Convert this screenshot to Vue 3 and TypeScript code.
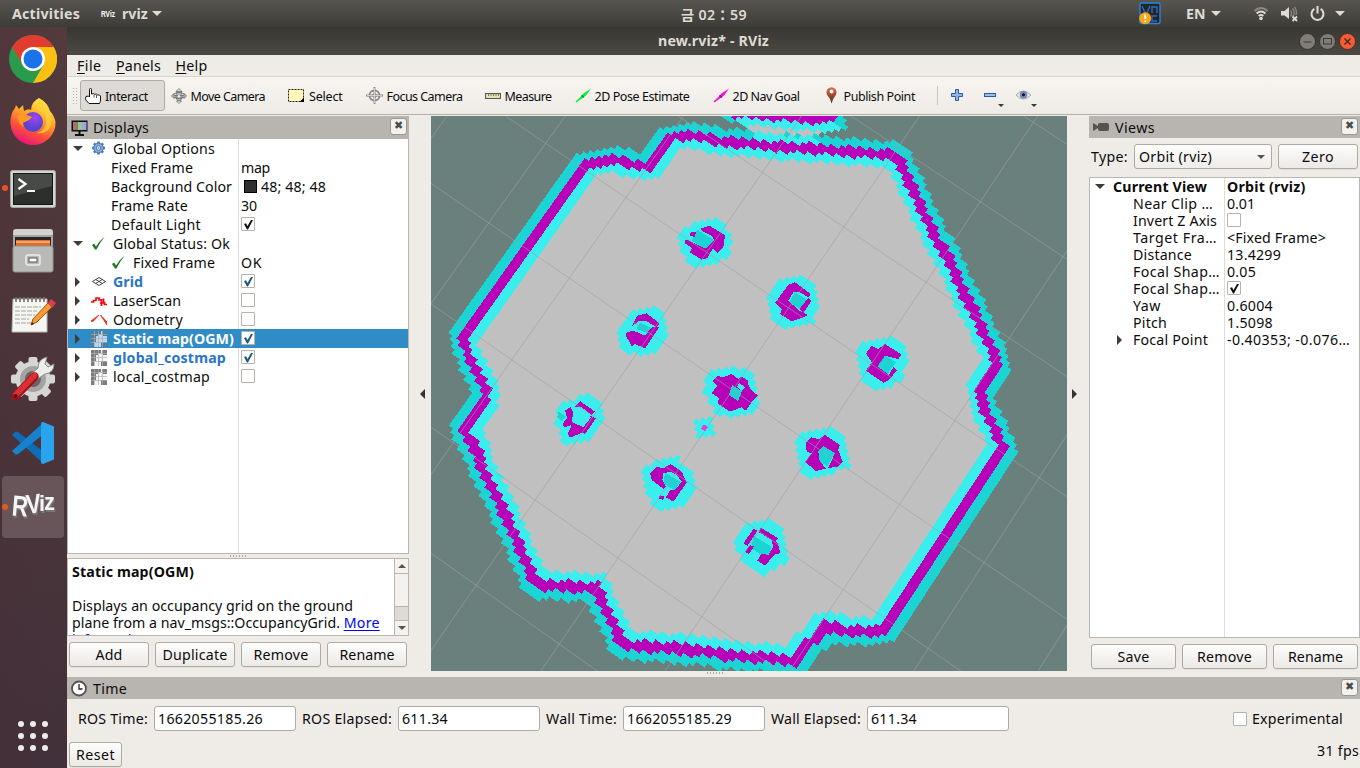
<script setup lang="ts">
type Pt = [number, number]
interface Row {
  label: string
  w: number
  icon?: string
  arrow?: 'open' | 'closed'
  level?: number
  value?: string
  vw?: number
  check?: 'on' | 'off' | 'blue'
  swatch?: boolean
  strong?: boolean
  selected?: boolean
}

/* Spreads a label over a given width in pixels. */
const vFit = {
  mounted(el: HTMLElement, binding: { value: number }) {
    const n = Array.from(el.textContent ?? '').length
    const natural = el.getBoundingClientRect().width
    if (n > 0) el.style.letterSpacing = ((binding.value - natural) / n).toFixed(3) + 'px'
  },
}

const tools = [
  { id: 'hand', label: 'Interact', w: 43 },
  { id: 'move', label: 'Move Camera', w: 74.5 },
  { id: 'select', label: 'Select', w: 33.5 },
  { id: 'focus', label: 'Focus Camera', w: 76 },
  { id: 'ruler', label: 'Measure', w: 47 },
  { id: 'pose', label: '2D Pose Estimate', w: 95 },
  { id: 'goal', label: '2D Nav Goal', w: 67 },
  { id: 'pin', label: 'Publish Point', w: 71.5 },
]

const displays: Row[] = [
  { label: 'Global Options', w: 102, icon: 'gear', arrow: 'open' },
  { label: 'Fixed Frame', w: 82, level: 1, value: 'map', vw: 29 },
  { label: 'Background Color', w: 121, level: 1, value: '48; 48; 48', vw: 65, swatch: true },
  { label: 'Frame Rate', w: 77, level: 1, value: '30', vw: 16 },
  { label: 'Default Light', w: 90, level: 1, check: 'on' },
  { label: 'Global Status: Ok', w: 117, icon: 'ok', arrow: 'open' },
  { label: 'Fixed Frame', w: 82, icon: 'ok', level: 2, value: 'OK', vw: 21 },
  { label: 'Grid', w: 30, icon: 'grid', arrow: 'closed', check: 'blue', strong: true },
  { label: 'LaserScan', w: 68, icon: 'laser', arrow: 'closed', check: 'off' },
  { label: 'Odometry', w: 70, icon: 'odom', arrow: 'closed', check: 'off' },
  { label: 'Static map(OGM)', w: 121, icon: 'map', arrow: 'closed', check: 'blue', strong: true, selected: true },
  { label: 'global_costmap', w: 113, icon: 'map', arrow: 'closed', check: 'blue', strong: true },
  { label: 'local_costmap', w: 97, icon: 'map', arrow: 'closed', check: 'off' },
]

const views: Row[] = [
  { label: 'Near Clip …', w: 80, value: '0.01', vw: 28 },
  { label: 'Invert Z Axis', w: 84, check: 'off' },
  { label: 'Target Fra…', w: 84, value: '<Fixed Frame>', vw: 99 },
  { label: 'Distance', w: 59, value: '13.4299', vw: 54 },
  { label: 'Focal Shap…', w: 87, value: '0.05', vw: 29 },
  { label: 'Focal Shap…', w: 87, check: 'on' },
  { label: 'Yaw', w: 28, value: '0.6004', vw: 46 },
  { label: 'Pitch', w: 34, value: '1.5098', vw: 46 },
  { label: 'Focal Point', w: 75, value: '-0.40353; -0.076…', vw: 123, arrow: 'closed' },
]

const clocks = [
  { label: 'ROS Time:', w: 70, value: '1662055185.26', vw: 105 },
  { label: 'ROS Elapsed:', w: 90, value: '611.34', vw: 46 },
  { label: 'Wall Time:', w: 71, value: '1662055185.29', vw: 105 },
  { label: 'Wall Elapsed:', w: 90, value: '611.34', vw: 46 },
]

const teeth = [0, 45, 90, 135]
const dots: Pt[] = []
for (let r = 0; r < 3; r++) for (let c = 0; c < 3; c++) dots.push([4 + c * 12, 4 + r * 12])

/* ---- 3D scene: ground plane seen from slightly off the vertical ---- */
const LEFT = 431
const TOP = 116
const K = 9.1e-5
const CELLS = 20.1
const SHIFT = 0.39

function project(i: number, j: number): Pt {
  const u = -208 + 82.65 * i - 56.35 * j
  const v = 255.5 - 56.6 * i - 82.8 * j
  const d = 1 + K * v
  return [318 + u / d, 277 - v / d]
}
function unproject(x: number, y: number): Pt {
  const s = 277 - y
  const v = s / (1 - K * s)
  const u = (x - 318) * (1 + K * v) + 208
  const q = v - 255.5
  return [(82.65 * u - 56.6 * q) / 10037, (-56.35 * u - 82.8 * q) / 10037]
}
const toCell = (x: number, y: number): Pt => {
  const [i, j] = unproject(x - LEFT, y - TOP)
  return [i * CELLS - SHIFT, j * CELLS]
}

const gridLines: string[] = []
for (let n = -8; n <= 12; n++) {
  for (const [a, b] of [[project(n, -10), project(n, 12)], [project(-8, n), project(14, n)]]) {
    gridLines.push(`M${a[0].toFixed(1)} ${a[1].toFixed(1)}L${b[0].toFixed(1)} ${b[1].toFixed(1)}`)
  }
}
const gridPath = gridLines.join('')

const wall: Pt[] = [
  [587, 163], [610, 159], [630, 163], [648.5, 167], [671.7, 137.5], [680, 135], [700, 136.5], [720, 141],
  [740, 142.5], [770, 146.3], [806.7, 147.5], [840, 150.7], [866.7, 152.3], [893.3, 154.7], [901.7, 161.7],
  [910, 180.7], [923.3, 209], [936.7, 237.3], [953.3, 264], [963.3, 290.7], [976.7, 314], [986.7, 335.7],
  [995.7, 354], [997, 361], [980, 389], [987.3, 413.3], [995.7, 428.3], [1003, 445], [884.5, 630],
  [866.7, 629.5], [850, 629.5], [833.3, 626.7], [823.3, 624.3], [797, 659.5], [776.7, 657], [748, 655.2],
  [730, 654.5], [706.7, 649.5], [690, 649], [670, 646.2], [627.7, 644.5], [620.5, 641], [611.7, 620],
  [603.3, 603.3], [596.7, 586.5], [576.7, 586], [556.7, 584], [538.3, 584.5], [532, 579.5], [526.7, 563.3],
  [513.3, 533.3], [498.3, 500], [485, 475], [476.7, 451.7], [464.5, 431], [463, 427], [487, 392],
  [470.5, 362.3], [461.5, 337],
]

function inside(p: Pt, poly: Pt[]): boolean {
  let hit = false
  for (let a = 0, b = poly.length - 1; a < poly.length; b = a++) {
    const [xa, ya] = poly[a]
    const [xb, yb] = poly[b]
    if (ya > p[1] !== yb > p[1] && p[0] < ((xb - xa) * (p[1] - ya)) / (yb - ya) + xa) hit = !hit
  }
  return hit
}
function segDist(p: Pt, a: Pt, b: Pt): number {
  const dx = b[0] - a[0]
  const dy = b[1] - a[1]
  const t = Math.max(0, Math.min(1, ((p[0] - a[0]) * dx + (p[1] - a[1]) * dy) / (dx * dx + dy * dy)))
  return Math.hypot(p[0] - a[0] - t * dx, p[1] - a[1] - t * dy)
}
function cellPath(a: number, b: number): string {
  const at = (x: number, y: number) => {
    const p = project((x + SHIFT) / CELLS, y / CELLS)
    return p[0].toFixed(1) + ' ' + p[1].toFixed(1)
  }
  return `M${at(a, b)}L${at(a + 1, b)}L${at(a + 1, b + 1)}L${at(a, b + 1)}Z`
}

const wallCells = wall.map(([x, y]) => toCell(x, y))
/* The two long walls run along the cell rows. */
wallCells[0][0] = wallCells[wallCells.length - 1][0] = 9
wallCells[27][0] = wallCells[28][0] = 111
const occupied = new Map<string, Pt>()
for (let a = -20; a < 135; a++) {
  for (let b = -80; b < 110; b++) {
    const c: Pt = [a + 0.5, b + 0.5]
    for (let n = 0; n < wallCells.length; n++) {
      const aligned = n === 27 || n === wallCells.length - 1
      if (segDist(c, wallCells[n], wallCells[(n + 1) % wallCells.length]) < (aligned ? 0.7 : 0.98)) {
        occupied.set(a + ',' + b, [a, b])
        break
      }
    }
  }
}
const inflated = new Map<string, Pt>()
occupied.forEach(([a, b]) => {
  for (let da = -2; da <= 2; da++)
    for (let db = -2; db <= 2; db++)
      if (da * da + db * db <= 4) inflated.set(a + da + ',' + (b + db), [a + da, b + db])
})
let wallPath = ''
let innerPath = ''
let outerPath = ''
occupied.forEach(([a, b]) => (wallPath += cellPath(a, b)))
inflated.forEach(([a, b]) => {
  if (inside([a + 0.5, b + 0.5], wallCells)) innerPath += cellPath(a, b)
  else outerPath += cellPath(a, b)
})
const roomPath = wall.map(([x, y]) => `${x - LEFT},${y - TOP}`).join(' ')

/* Obstacles are outlined in thirds of a pixel from a local origin. */
interface Obstacle { x: number; y: number; halo: string; hits: string[]; core: string[] }
const obstacles: Obstacle[] = [
  {
    x: 430, y: 114, halo: '740,370 765,340 795,320 855,308 890,330 908,380 895,430 850,450 800,460 765,435 750,400',
    hits: ['810,345 838,335 885,363 880,400 863,418 848,404 832,432 815,437 780,415 787,402 763,387 768,376 828,404 852,378 845,366 818,352', '782,353 797,355 795,370 780,365'],
    core: ['802,347 852,378 825,405 785,380'],
  },
  {
    x: 430, y: 114, halo: '565,640 590,600 610,585 668,575 700,595 712,660 680,710 628,725 578,710 568,670',
    hits: ['605,638 622,605 650,598 688,628 680,640 650,622 628,620', '590,655 610,650 645,665 665,640 688,640 645,703 615,690 605,697 588,665'],
    core: ['630,625 668,645 655,658 620,645'],
  },
  {
    x: 740, y: 114, halo: '80,550 110,505 180,482 225,510 240,570 222,630 138,643 100,620 85,580',
    hits: ['105,567 145,512 165,505 212,540 205,550 180,535 160,535 145,560 178,590 205,603 185,612 155,622 120,600 125,585', '205,552 215,560 190,597 178,585'],
    core: ['165,535 205,560 180,585 147,565'],
  },
  {
    x: 740, y: 114, halo: '355,700 375,682 455,665 500,697 508,745 490,785 460,820 412,830 365,795 358,755',
    hits: ['378,718 395,695 415,705 435,690 485,722 475,735 435,725 412,757 447,783 460,760 470,770 445,800 430,806 378,770 395,745'],
    core: ['433,723 468,745 440,783 410,762'],
  },
  {
    x: 430, y: 114, halo: '822,820 838,770 900,755 950,765 975,790 988,860 965,900 900,912 860,895 832,860',
    hits: ['845,838 862,815 848,800 862,785 880,790 905,780 925,795 935,788 955,800 955,812 965,830 985,845 962,868 948,890 935,880 900,893 862,868 868,852'],
    core: ['905,808 920,818 937,828 922,854 905,838 890,832'],
  },
  {
    x: 430, y: 390, halo: '375,90 385,45 465,10 515,45 520,90 490,145 450,155 405,165 385,125',
    hits: ['435,50 450,33 495,65 485,75 455,52', '405,62 422,50 430,70 425,95 460,112 483,82 475,75 498,85 465,132 455,128 440,135 420,143 413,132 425,105 402,112 397,102 412,85'],
    core: ['385,65 408,80 395,92 382,80'],
  },
  {
    x: 430, y: 390, halo: '637,230 690,205 740,198 790,250 795,295 755,350 675,355 650,300',
    hits: ['660,250 680,230 700,235 722,222 755,245 770,278 730,335 708,322 720,300 735,300 755,275 740,255 720,245 700,250 697,270 708,290 700,296 665,270', '690,315 704,320 698,330 686,325'],
    core: ['705,248 750,275 735,302 700,280'],
  },
  {
    x: 740, y: 390, halo: '170,150 190,125 268,110 318,140 332,230 280,245 210,267 180,240 172,195',
    hits: ['197,158 215,142 235,148 255,135 300,165 295,180 308,215 290,232 265,233 285,190 250,168 235,185 238,210 257,236 228,243 195,215 215,190 200,185'],
    core: ['250,168 285,190 262,228 238,215 235,180'],
  },
  {
    x: 740, y: 390, halo: '-12,440 10,405 85,385 130,415 137,460 147,505 105,540 55,552 35,530 5,515 -10,470',
    hits: ['10,460 42,415 52,423 22,468', '60,412 115,445 105,457 57,427', '95,452 112,458 122,490 105,492 75,527 52,512 65,490 85,496 100,470', '15,485 30,465 42,470 27,492'],
    core: ['40,437 95,470 85,495 60,492 35,475'],
  },
]

function localPoints(o: { x: number; y: number }, s: string): Pt[] {
  return s.split(' ').map((p) => {
    const [x, y] = p.split(',').map(Number)
    return [o.x + x / 3, o.y + y / 3] as Pt
  })
}
function polyPath(o: { x: number; y: number }, s: string): string {
  return 'M' + localPoints(o, s).map(([x, y]) => `${(x - LEFT).toFixed(1)} ${(y - TOP).toFixed(1)}`).join('L') + 'Z'
}
function filledCells(poly: Pt[]): string {
  const cells = poly.map(([x, y]) => toCell(x, y))
  const xs = cells.map((c) => c[0])
  const ys = cells.map((c) => c[1])
  let d = ''
  for (let a = Math.floor(Math.min(...xs)); a <= Math.max(...xs); a++)
    for (let b = Math.floor(Math.min(...ys)); b <= Math.max(...ys); b++)
      if (inside([a + 0.5, b + 0.5], cells)) d += cellPath(a, b)
  return d
}
const haloPath = obstacles.map((o) => filledCells(localPoints(o, o.halo))).join('')
const hitPath = obstacles.map((o) => o.hits.map((h) => polyPath(o, h)).join('')).join('')
const corePath = obstacles.map((o) => o.core.map((h) => polyPath(o, h)).join('')).join('')

const shelf = { x: 740, y: 114 }
const shelfHalo = filledCells(localPoints(shelf, '-40,-20 310,-20 322,25 305,48 275,58 220,50 150,45 80,38 0,32 -20,22'))
const shelfEdge = filledCells(localPoints(shelf, '-55,-20 -20,-20 -15,15 -30,30 -50,20')) + filledCells(localPoints(shelf, '295,-20 315,-20 325,45 290,40'))
const shelfHits = filledCells(localPoints(shelf, '-25,-20 300,-20 300,18 270,26 220,27 180,22 120,20 60,14 -15,8'))
const shelfFloor = filledCells(localPoints(shelf, '15,28 70,36 150,42 255,50 240,72 130,72 60,58'))
const shelfLink = filledCells(localPoints(shelf, '50,52 130,62 240,70 230,95 40,90'))

/* A single occupied cell with its inflation. */
const lone = toCell(703.3, 428).map(Math.floor)
let marker = ''
for (let da = -2; da <= 2; da++)
  for (let db = -2; db <= 2; db++)
    if (da * da + db * db <= 4) marker += cellPath(lone[0] + da, lone[1] + db)
const markerHit = cellPath(lone[0], lone[1])
</script>

<template>
  <div class="desktop">
    <header class="topbar">
      <b v-fit="68" class="t-act">Activities</b>
      <svg class="t-logo" width="16" height="14" viewBox="0 0 16 14"><text x="1" y="10" font-size="8.500" font-weight="bold" textLength="14" lengthAdjust="spacingAndGlyphs">RViz</text></svg>
      <b v-fit="26" class="t-app">rviz</b>
      <i class="caret"></i>
      <b v-fit="66" class="t-clock">금 02：59</b>
      <div class="tray">
        <svg width="23" height="23" viewBox="0 0 23 23"><rect x="1" y="1" width="20" height="20.500" rx="1.500" fill="#22252b" stroke="#2a83e0" stroke-width="1.400" /><path d="M3 4l4 9 4-9M13 11V5h5v6M18 14h-5v5h5" fill="none" stroke="#2c6fb2" stroke-width="1.400" /><circle cx="6.200" cy="16.200" r="6" fill="#f9a61a" /><path d="M6.200 12.500v4.600M6.200 18.400v1.700" stroke="#fff" stroke-width="1.800" /></svg>
        <b v-fit="19" class="t-lang">EN</b>
        <i class="caret c-lang"></i>
        <svg class="wifi" width="16" height="15" viewBox="0 0 16 15" fill="none" stroke-width="2"><path d="M1.500 5Q8-1 14.500 5" stroke="#8c8a84" /><path d="M3.600 7.500Q8 3.500 12.400 7.500" stroke="#dfdbd2" /><path d="M5.700 10Q8 8 10.300 10" stroke="#dfdbd2" /><circle cx="8" cy="12.500" r="1.800" fill="#dfdbd2" /></svg>
        <svg class="vol" width="17" height="16" viewBox="0 0 17 16"><path d="M0 5h3.500L8 1v12L3.500 9.500H0z" fill="#dfdbd2" /><path d="M9.500 4.500q2 2.500 0 6M11.500 2.500q3.500 4.500 0 8M13.500 1q3 4 1.500 8" fill="none" stroke="#84827c" stroke-width="1.500" /><path d="M11.500 10.500l4.500 4.500m0-4.500l-4.500 4.500" stroke="#dfdbd2" stroke-width="1.800" /></svg>
        <svg class="power" width="15" height="16" viewBox="0 0 15 16" fill="none" stroke="#dfdbd2" stroke-width="2"><path d="M4.300 2.800a6 6 0 1 0 6.400 0M7.500 0v7.500" /></svg>
        <i class="caret"></i>
      </div>
    </header>

    <div class="body">
      <nav class="dock">
        <div class="app">
          <svg width="48" height="48" viewBox="0 0 48 48"><circle cx="24" cy="24" r="24" fill="#2a9b4b" /><path d="M3.200 12A24 24 0 0 1 44.800 12H24L14 30z" fill="#e23b30" /><path d="M44.800 12A24 24 0 0 1 24 48L34.500 30 24 12z" fill="#fcc012" /><circle cx="24" cy="24" r="12" fill="#fff" /><circle cx="24" cy="24" r="9.500" fill="#1a73e8" /></svg>
        </div>
        <div class="app up1">
          <svg width="46" height="47" viewBox="0 0 46 47"><defs><linearGradient id="ff" x1=".75" y1="0" x2=".3" y2="1"><stop offset="0" stop-color="#fff14a" /><stop offset=".4" stop-color="#ffa62a" /><stop offset=".7" stop-color="#ff4f3a" /><stop offset="1" stop-color="#e3117e" /></linearGradient><radialGradient id="globe" cx=".6" cy=".3"><stop offset="0" stop-color="#a343f0" /><stop offset="1" stop-color="#5b45d0" /></radialGradient></defs><path d="M29 0q9 5 11 13 4 4 5.500 11a22.500 22 0 0 1-45 2q-.5-10 4.500-16l1-3 3 4 4-4 1 6q5-3 7-1 0-8 8-12z" fill="url(#ff)" /><circle cx="23" cy="24" r="10" fill="url(#globe)" /><path d="M7 18q8-3 15 1-3 4-7 5-4 0-1 5-5-2-7-11z" fill="#ff9a24" /><path d="M28 12q10 4 8 14-2 7-9 9 13 2 15-13Q40 10 29 1q-5 5-1 11z" fill="#ffd23a" opacity=".75" /></svg>
        </div>
        <div class="app running down1">
          <svg width="46" height="38" viewBox="0 0 46 38"><rect x=".5" y=".5" width="45" height="37" rx="2" fill="#d5d5d3" stroke="#a6a6a4" /><rect x="3.500" y="3.500" width="39" height="31" fill="#2d2f2d" stroke="#161616" /><path d="M4 4h38v12L4 26z" fill="#484a48" /><path d="M8.500 9l7 5-7 5M17 21h8" fill="none" stroke="#fff" stroke-width="2.200" /></svg>
        </div>
        <div class="app">
          <svg width="42" height="44" viewBox="0 0 42 44"><path d="M1 2q0-2 3-2h34q3 0 3 2v40H1z" fill="#a4a4a2" /><path d="M1 6q0-6 3-6h34q3 0 3 6z" fill="#d2d2d0" /><rect x="3" y="8" width="36" height="10" fill="#2c2622" /><path d="M4 11h34v7H4z" fill="#df6c28" /><path d="M4 13h34" stroke="#ffe2b8" /><rect x="1" y="17" width="40" height="26" rx="2" fill="#b9b9b7" stroke="#929290" /><rect x="14" y="26" width="14" height="10" rx="2" fill="#b9b9b7" stroke="#ecece9" stroke-width="1.500" /><rect x="17" y="29" width="8" height="4" fill="#fff" stroke="#555" /></svg>
        </div>
        <div class="app">
          <svg width="46" height="38" viewBox="0 0 46 38"><path d="M3 3h34v33H2z" fill="#f5f5f2" stroke="#b9b9b5" /><path d="M6 1v5M10 1v5M14 1v5M18 1v5M22 1v5M26 1v5M30 1v5M34 1v5" stroke="#6f6f6d" stroke-width="1.600" /><path d="M5 11h26M5 15h22M5 19h20M5 23h14M5 27h16" stroke="#a5a5a2" stroke-dasharray="5 1" /><path d="M21 29l2-6L38 7l4 4-15 15z" fill="#f59c36" stroke="#a45410" /><path d="M38 7l3-4 5 4-4 5z" fill="#d5424e" /><path d="M21 29l1-3 2 2z" fill="#222" /></svg>
        </div>
        <div class="app">
          <svg width="46" height="46" viewBox="0 0 46 46"><g transform="translate(23 23)"><rect v-for="a in teeth" :key="a" x="-4.500" y="-22" width="9" height="44" rx="2" fill="#d5d5d3" :transform="`rotate(${a})`" /><circle r="17.500" fill="#d5d5d3" /><circle r="13" fill="#a5a3a2" /><circle r="8" fill="#6c6264" /></g><path d="M26 24L21 18 28 12Q28 3 37 1l-2 7 3 3 6-3q0 9-9 10z" fill="#eceeec" stroke="#8c8c8a" /><path d="M24.500 20.500L5.500 40" stroke="#a0141c" stroke-width="8.500" stroke-linecap="round" /><path d="M24.500 19.500L6 38.500" stroke="#d92f35" stroke-width="5.500" stroke-linecap="round" /><circle cx="5.500" cy="40" r="2" fill="#5a1014" /></svg>
        </div>
        <div class="app">
          <svg width="42" height="42" viewBox="0 0 42 42"><path d="M0 13l3-3q1-1 3 0l26 20v12z" fill="#0f6db8" /><path d="M0 29l3 3q1 1 3 0L32 12V0z" fill="#1681cc" /><path d="M31 0l11 4.500v33L31 42q-2 0-2-2V2q0-2 2-2z" fill="#2ba4ee" /></svg>
        </div>
        <div class="app running active">
          <svg width="48" height="36" viewBox="0 0 48 36" class="rv"><text x="3" y="27" font-size="29" textLength="16" lengthAdjust="spacingAndGlyphs" transform="rotate(5 10 18)">R</text><text x="17" y="24" font-size="27" textLength="15" lengthAdjust="spacingAndGlyphs" transform="rotate(-6 24 14)">V</text><text x="30" y="22" font-size="22" textLength="6" lengthAdjust="spacingAndGlyphs">i</text><text x="35" y="21" font-size="23" textLength="11" lengthAdjust="spacingAndGlyphs">z</text></svg>
        </div>
        <svg class="apps" width="32" height="32" viewBox="0 0 32 32"><circle v-for="(p, n) in dots" :key="n" :cx="p[0]" :cy="p[1]" r="3" fill="#efedeb" /></svg>
      </nav>

      <div class="window">
        <div class="titlebar">
          <b v-fit="111">new.rviz* - RViz</b>
          <div class="winbtns">
            <svg width="17" height="17" viewBox="0 0 17 17"><circle cx="8.500" cy="8.500" r="8" fill="#7f7d75" stroke="#33322e" /><path d="M4.500 9h8" stroke="#3b3a36" /></svg>
            <svg width="17" height="17" viewBox="0 0 17 17"><circle cx="8.500" cy="8.500" r="8" fill="#7f7d75" stroke="#33322e" /><rect x="4.500" y="5.500" width="8" height="5.500" fill="none" stroke="#3b3a36" /></svg>
            <svg width="17" height="17" viewBox="0 0 17 17"><circle cx="8.500" cy="8.500" r="8" fill="#ee5f37" stroke="#64281a" /><path d="M5.500 5.500l6 6m0-6l-6 6" stroke="#492015" stroke-width="1.200" /></svg>
          </div>
        </div>
        <div class="menubar">
          <span v-fit="24.500"><u>F</u>ile</span><span v-fit="45"><u>P</u>anels</span><span v-fit="32"><u>H</u>elp</span>
        </div>
        <div class="toolbar">
          <i class="grip"></i>
          <div class="tools">
            <div v-for="t in tools" :key="t.id" class="tool" :class="{ on: t.id === 'hand' }">
              <svg v-if="t.id === 'hand'" width="16" height="16" viewBox="0 0 16 16"><path d="M4.500 9V1.500q0-1 1-1t1 1V6l2-.5 1 .8 2-.3 1 .9 2 .1 1 1V12q0 1.500-1 3.500H4L.8 12q-.6-2 .2-3.500l2.500-.5 1 1" fill="#fff" stroke="#111" /><path d="M9 6.500v3M11.500 7v3" stroke="#555" /></svg>
              <svg v-else-if="t.id === 'move'" width="16" height="16" viewBox="0 0 16 16" fill="#f4f2ef" stroke="#666" stroke-width=".8"><path d="M8 .5l3 3H9v4h4v-2l2.500 2.500L13 10.500V9H9v4h1.500L8 15.500 5.500 13H7V9H3v1.500L.5 8 3 5.500v2h4v-4H5z" /><ellipse cx="8" cy="7.500" rx="6" ry="3" fill="none" /><ellipse cx="8" cy="8" rx="3" ry="5" fill="none" /></svg>
              <svg v-else-if="t.id === 'select'" width="17" height="16" viewBox="0 0 17 16"><rect x=".5" y="1.500" width="15" height="12" fill="#fff6b8" stroke="#222" stroke-dasharray="2 1" /><path d="M16 9.500v4.500h-4.500z" /></svg>
              <svg v-else-if="t.id === 'focus'" width="17" height="17" viewBox="0 0 17 17" fill="none" stroke="#888"><circle cx="8.500" cy="8.500" r="5" stroke-width="1.800" /><circle cx="8.500" cy="8.500" r="2" /><path d="M8.500 0v17M0 8.500h17" stroke-width="1.800" /><path d="M8.500 1v15M1 8.500h15" stroke="#e4e2de" stroke-width=".8" /></svg>
              <svg v-else-if="t.id === 'ruler'" width="16" height="16" viewBox="0 0 16 16"><rect x=".5" y="5.500" width="15" height="5" fill="#e9dfac" stroke="#555" /><path d="M3.500 6v2M6 6v2M8.500 6v2M11 6v2M13.500 6v2" stroke="#776" /></svg>
              <svg v-else-if="t.id === 'pose' || t.id === 'goal'" width="16" height="16" viewBox="0 0 16 16" :class="t.id"><path d="M.5 13.500l7-6.500.8-1.500L16 .5l-5 7-1.800 1.300L1.500 14.500z" class="shaft" /><path d="M7 6.500l2.500 2.500-1.500 1-2-2z" class="joint" /></svg>
              <svg v-else width="16" height="17" viewBox="0 0 16 17"><defs><linearGradient id="pin" x2="0" y2="1"><stop offset="0" stop-color="#ec6840" /><stop offset="1" stop-color="#4a2b1c" /></linearGradient></defs><path d="M7.500 16.500Q7 12 3.500 8.500Q1.500 5 3.500 2Q7.500-1.500 11.500 2Q13.500 5 11.500 8.500Q8.500 12 7.500 16.500z" fill="url(#pin)" /><circle cx="7.500" cy="4.500" r="2" fill="#fff" /></svg>
              <span v-fit="t.w">{{ t.label }}</span>
            </div>
          </div>
          <i class="sep"></i>
          <svg class="extra" width="90" height="26" viewBox="0 0 90 26"><path d="M5.500 6.500h3v4h4v3h-4v4h-3v-4h-4v-3h4z" fill="#8fb6e4" stroke="#2a5ba0" /><rect x="34.500" y="10.500" width="11" height="3" fill="#9cc0ea" stroke="#2a5ba0" /><path d="M48 21h6l-3 3zM81 21h6l-3 3z" fill="#3a3a38" /><path d="M66 12q7-8 15 0-8 8-15 0z" fill="#ecebe8" stroke="#aaa8a4" /><circle cx="73.500" cy="11.800" r="3.800" fill="#7487c4" /><circle cx="73.500" cy="11.800" r="1.500" fill="#111" /></svg>
        </div>

        <div class="panels">
          <section class="displays">
            <div class="head">
              <svg width="17" height="16" viewBox="0 0 17 16"><rect x=".5" y=".5" width="16" height="11" fill="#111" /><path d="M2 2h4.500v8H2z" fill="#b56a72" /><path d="M6.500 2H11v8H6.500z" fill="#8ecb8c" /><path d="M11 2h4.500v8H11z" fill="#a4a2e4" /><path d="M8.500 11v3M4 15h9" stroke="#111" stroke-width="2" /></svg>
              <span v-fit="56">Displays</span><i class="close">✖</i>
            </div>
            <div class="tree">
              <div v-for="(r, n) in displays" :key="n" class="row" :class="['lv' + (r.level ?? 0), { selected: r.selected, strong: r.strong }]">
                <div class="name">
                  <i class="arrow" :class="r.arrow"></i>
                  <svg v-if="r.icon" class="ico" width="16" height="16" viewBox="0 0 16 16">
                    <g v-if="r.icon === 'gear'" transform="translate(7.500 7)"><rect v-for="a in teeth" :key="a" x="-1.300" y="-6.500" width="2.600" height="13" fill="#4a78b8" :transform="`rotate(${a})`" /><circle r="4.800" fill="#84aede" stroke="#4a78b8" /><circle r="2.300" fill="#dfeaf6" stroke="#4a78b8" /><circle r=".8" fill="#4a78b8" /></g>
                    <path v-else-if="r.icon === 'ok'" d="M1 9l2.200-1.500L5 10.500Q9 4 13.500 1 8.500 7 5.500 13.500H4z" fill="#1e7a26" />
                    <path v-else-if="r.icon === 'grid'" d="M1.500 7.500l6.500-4 6.500 4-6.500 4zM4.700 5.500l6.600 4M11.300 5.500l-6.600 4" fill="none" stroke="#444" />
                    <path v-else-if="r.icon === 'laser'" d="M0 9h2.500V7.500H5V5h3v2h2M9 10h3.500V5.500M10.500 6v7M12.500 9.500h1v2H16" fill="none" stroke="#f80808" stroke-width="1.700" />
                    <path v-else-if="r.icon === 'odom'" d="M0 9l8-6-6 6.500zM9.500 3L16 13v-3z" fill="#ec2418" stroke="#ec2418" stroke-width=".8" />
                    <g v-else class="tile"><path d="M0 0h16v16H0z" class="free" /><path d="M0 0h10v3H7v2H5v6H3v5H0zM10 11h6v5h-6zM11 0h5v5h-4V3h-1z" class="occ" /><path d="M3.500 0v16M7.500 0v16M11.500 0v16M0 3.500h16M0 7.500h16M0 11.500h16" stroke="#b2b2b2" stroke-width=".7" /></g>
                  </svg>
                  <span v-fit="r.w">{{ r.label }}</span>
                </div>
                <div class="val">
                  <i v-if="r.swatch" class="swatch"></i>
                  <span v-if="r.value" v-fit="r.vw">{{ r.value }}</span>
                  <i v-if="r.check" class="box"><svg v-if="r.check !== 'off'" width="11" height="11" viewBox="0 0 11 11"><path d="M1 5l2-.8L4.500 7 8 1h2L5 10.500H4z" :fill="r.check === 'blue' ? '#1b5580' : '#111'" /></svg></i>
                </div>
              </div>
            </div>
            <i class="hgrip"></i>
            <div class="desc">
              <div class="doc">
                <p><b v-fit="122">Static map(OGM)</b></p>
                <p>&nbsp;</p>
                <p><span v-fit="281">Displays an occupancy grid on the ground</span></p>
                <p><span v-fit="268">plane from a nav_msgs::OccupancyGrid.</span> <a v-fit="36">More</a></p>
                <p><a v-fit="76">information</a></p>
              </div>
              <div class="scroll"><i class="up"></i><i class="thumb"></i><i class="gap"></i><i class="down"></i></div>
            </div>
            <div class="btns">
              <button><span v-fit="27">Add</span></button><button><span v-fit="65">Duplicate</span></button><button><span v-fit="55">Remove</span></button><button><span v-fit="55">Rename</span></button>
            </div>
          </section>

          <div class="fold"><i class="left"></i></div>
          <svg class="scene" width="636" height="555" viewBox="0 0 636 555" shape-rendering="crispEdges">
            <rect width="636" height="555" fill="#6a807d" />
            <polygon :points="roomPath" fill="#c0c0c0" />
            <path :d="shelfFloor" fill="#c0c0c0" />
            <path :d="shelfHalo" fill="#3beeee" />
            <path :d="shelfEdge" fill="#1bd5d5" />
            <path :d="outerPath" fill="#1bd5d5" />
            <path :d="shelfLink" fill="#3beeee" />
            <path :d="innerPath" fill="#3beeee" />
            <path :d="shelfHits" fill="#b800b8" />
            <path :d="wallPath" fill="#b800b8" />
            <path :d="haloPath + marker" fill="#3beeee" />
            <path :d="corePath" fill="#1bd5d5" />
            <path :d="hitPath" fill="#b800b8" />
            <path d="M301 269l10 6-4 10-9-6z" fill="#1bd5d5" />
            <path d="M308 267l6 4-3 4-5-4z" fill="#3beeee" />
            <path :d="markerHit" fill="#e838e8" />
            <path :d="gridPath" fill="none" stroke="#a0a0a4" stroke-opacity=".6" shape-rendering="auto" stroke-width="1" />
          </svg>
          <div class="fold"><i class="right"></i></div>

          <section class="views">
            <div class="head">
              <svg width="17" height="14" viewBox="0 0 17 14"><path d="M0 3l5 3V4q1-1 2-1h7q2 0 2 2v4q0 2-2 2H7q-2 0-2-2V8l-5 3z" fill="#55534f" /></svg>
              <span v-fit="40">Views</span><i class="close">✖</i>
            </div>
            <div class="type">
              <span v-fit="37">Type:</span>
              <div class="combo"><span v-fit="73">Orbit (rviz)</span><i></i></div>
              <button><span v-fit="32">Zero</span></button>
            </div>
            <div class="vtree">
              <div class="vrow top"><div class="name"><i class="arrow open"></i><b v-fit="94">Current View</b></div><div class="val"><b v-fit="78.500">Orbit (rviz)</b></div></div>
              <div v-for="(r, n) in views" :key="n" class="vrow">
                <div class="name"><i class="arrow" :class="r.arrow"></i><span v-fit="r.w">{{ r.label }}</span></div>
                <div class="val">
                  <span v-if="r.value" v-fit="r.vw">{{ r.value }}</span>
                  <i v-if="r.check" class="box"><svg v-if="r.check !== 'off'" width="11" height="11" viewBox="0 0 11 11"><path d="M1 5l2-.8L4.500 7 8 1h2L5 10.500H4z" fill="#111" /></svg></i>
                </div>
              </div>
            </div>
            <div class="btns vb">
              <button><span v-fit="32">Save</span></button><button><span v-fit="55">Remove</span></button><button><span v-fit="55">Rename</span></button>
            </div>
          </section>
        </div>

        <i class="hgrip mid"></i>
        <section class="time">
          <div class="head">
            <svg width="17" height="17" viewBox="0 0 17 17"><circle cx="8" cy="8.500" r="7" fill="#fff" stroke="#55534f" stroke-width="1.800" /><path d="M8 4v5h3.500" fill="none" stroke="#222" stroke-width="1.300" /></svg>
            <span v-fit="34">Time</span><i class="close">✖</i>
          </div>
          <div class="fields">
            <template v-for="c in clocks" :key="c.label">
              <label><span v-fit="c.w">{{ c.label }}</span></label>
              <div class="field"><span v-fit="c.vw">{{ c.value }}</span></div>
            </template>
            <div class="exp"><i class="box"></i><span v-fit="91">Experimental</span></div>
          </div>
          <div class="foot"><button><span v-fit="39">Reset</span></button><span v-fit="42" class="fps">31 fps</span></div>
        </section>
      </div>
    </div>
  </div>
</template>

<style>
html, body { overflow: hidden; }
</style>

<style scoped>
* { box-sizing: border-box; }
.desktop { width: 1360px; height: 768px; overflow: hidden; font: 14.2px/19px "Noto Sans", "Noto Sans CJK KR", sans-serif; color: #0c0c0c; background: #efebe7; display: flex; flex-direction: column; white-space: nowrap; }
i { font-style: normal; flex: none; }
svg { flex: none; display: block; }
p { margin: 0; }
span, b, a { flex: none; }
.topbar { position: relative; flex: none; height: 27px; display: flex; align-items: center; padding: 0 15px 0 12px; background: linear-gradient(#57554e, #3d3c38); color: #dfdbd2; }
.t-logo { margin-left: 20px; fill: #fff; font-family: "Liberation Sans", sans-serif; overflow: visible; }
.t-app { margin-left: 6px; width: 26px; }
.caret { width: 0; height: 0; border: 5px solid transparent; border-top-color: #dfdbd2; border-bottom: 0; margin-left: 4px; }
.t-clock { position: absolute; left: 681px; top: 5px; font-weight: 600; }
.tray { margin-left: auto; display: flex; align-items: center; height: 27px; }
.t-lang { margin-left: 24px; width: 19px; }
.c-lang { margin-left: 6px; }
.wifi { margin-left: 32px; }
.vol { margin-left: 12px; }
.power { margin-left: 12px; }
.power + .caret { margin-left: 10px; }
.body { flex: 1; display: flex; min-height: 0; }
.dock { width: 67px; flex: none; display: flex; flex-direction: column; background: linear-gradient(90deg, rgba(70, 40, 52, .15), transparent), linear-gradient(#533a3d, #4b353a 50%, #42313a); }
.app { position: relative; height: 64px; flex: none; display: flex; align-items: center; justify-content: center; padding-right: 1px; }
.app.up1 { padding-bottom: 3px; }
.app.down1 { padding-top: 3px; }
.app.running::before { content: ""; position: absolute; left: 2px; top: 30px; width: 6px; height: 6px; border-radius: 3px; background: #e95420; }
.app.active { margin: 1px 3px 0 2px; height: 62px; border-radius: 4px; background: #685559; padding-right: 0; }
.app.active::before { left: 0; top: 28px; }
.rv { font-family: "Liberation Sans", sans-serif; font-weight: bold; fill: #f5f5f5; overflow: visible; filter: drop-shadow(1px 2px 0 #777); }
.apps { margin: auto 0 16px 17px; }
.window { flex: 1; min-width: 0; display: flex; flex-direction: column; }
.titlebar { position: relative; flex: none; height: 28px; display: flex; align-items: center; padding-left: 591px; color: #dfdbd2; background: linear-gradient(#383733, #4b4943); }
.titlebar b { margin-top: -2px; }
.winbtns { display: flex; gap: 3px; margin-left: auto; padding-right: 4px; }
.menubar { height: 22px; flex: none; display: flex; gap: 14.500px; align-items: center; padding-left: 10px; border-bottom: 1px solid #d6d2cd; }
.menubar u { text-decoration-thickness: 1px; text-underline-offset: 2px; }
.toolbar { height: 38px; flex: none; display: flex; align-items: center; background: linear-gradient(#f8f5f1, #eeeae6); border-bottom: 1px solid #b5b0aa; }
.grip { width: 5px; height: 18px; margin-left: 5px; background: radial-gradient(circle, #b4b0aa 35%, transparent 40%) 0 0 / 3px 3px; }
.tools { margin-left: 3px; display: grid; grid-template-columns: 85.500px 117.500px 77.500px 119px 90px 138px 111px 127px; font-size: 12.500px; }
.tool { height: 31px; display: flex; align-items: center; gap: 4px; padding-left: 5px; }
.tool span { margin-top: 1px; line-height: 17px; padding-top: 1px; }
.tool.on { width: 85px; border: 1px solid #aeaaa5; border-radius: 3px; background: #dedad6; padding-left: 4px; }
.pose .shaft { fill: #0af03c; }
.pose .joint { fill: #0a9a28; }
.goal .shaft { fill: #f312d4; }
.goal .joint { fill: #a80092; }
.sep { width: 1px; height: 19px; background: #c9c5c0; margin-left: -9px; }
.extra { margin-left: 12px; }
.panels { display: flex; height: 556px; flex: none; padding-top: 1px; }
.head { position: relative; flex: none; display: flex; align-items: center; height: 23px; padding-left: 4px; gap: 5px; background: #b8b4b0; }
.close { margin-left: auto; width: 17px; height: 17px; border: 1px solid #9a9691; border-radius: 3px; background: #f3f1ee; color: #4a4a48; font: 11px/14px "DejaVu Sans", sans-serif; text-align: center; }
.displays { width: 342px; flex: none; display: flex; flex-direction: column; }
.displays .close { margin-right: 2px; align-self: flex-start; margin-top: 2px; }
.views .close, .time .close { margin-right: 2px; align-self: flex-start; margin-top: 2px; }
.tree { height: 415px; flex: none; border: 1px solid #b9b5b0; border-top: 0; background: linear-gradient(#dedcda, #dedcda) 170px 0 / 1px 100% no-repeat #fff; }
.row { display: flex; height: 19px; align-items: center; line-height: 17px; }
.name { display: flex; align-items: center; flex: none; }
.row .name { width: 171px; padding-left: 4px; overflow: hidden; height: 19px; }
.row span { margin-top: -1px; }
.val { display: flex; align-items: center; }
.row .val { padding-left: 2px; }
.val .box { margin-top: -1px; }
.arrow { width: 11px; height: 11px; display: flex; align-items: center; justify-content: center; }
.arrow.open::before { content: ""; border: 5px solid transparent; border-top-color: #3c3c3a; border-bottom: 0; }
.arrow.closed::before { content: ""; border: 5px solid transparent; border-left-color: #3c3c3a; border-right: 0; }
.ico { margin: 0 6px 0 8px; }
.lv1 .arrow { width: 39px; }
.lv2 .arrow { width: 31px; }
.strong .name span { font-weight: bold; color: #2a74c4; }
.selected { background: #308cc6; }
.selected .name span { color: #fff; }
.free { fill: #f5f5f5; }
.occ { fill: #7c7c7c; }
.selected .free { fill: #c4def0; }
.selected .occ { fill: #587d96; }
.selected .tile { opacity: .95; }
.swatch { width: 13px; height: 13px; background: #303030; border: 1px solid #000; margin: -1px 4px 0 3px; }
.box { width: 14px; height: 14px; border: 1px solid #b7b2ac; border-radius: 1px; background: #fff; display: flex; align-items: center; justify-content: center; }
.hgrip { width: 17px; height: 2px; margin: 1px auto 1px 162px; background: radial-gradient(circle, #aaa6a0 40%, transparent 45%) 0 0 / 3px 2px; }
.desc { height: 78px; flex: none; display: flex; border: 1px solid #b9b5b0; background: #fff; }
.doc { flex: 1; overflow: hidden; padding: 4px 0 0 4px; line-height: 17px; }
.doc a { color: #00f; text-decoration: underline; text-underline-offset: 2px; }
.scroll { width: 14px; flex: none; display: flex; flex-direction: column; border-left: 1px solid #b9b5b0; background: #dedad6; }
.scroll i { background: #f4f2ef; display: flex; align-items: center; justify-content: center; }
.scroll .up, .scroll .down { height: 14px; }
.up::before { content: ""; border: 4px solid transparent; border-bottom-color: #555; border-top: 0; }
.down::before { content: ""; border: 4px solid transparent; border-top-color: #555; border-bottom: 0; }
.scroll .thumb { height: 34px; border: solid #b9b5b0; border-width: 1px 0; }
.scroll .gap { flex: 1; background: #dedad6; border-bottom: 1px solid #b9b5b0; }
button { display: flex; align-items: center; justify-content: center; height: 25px; padding: 0; font: inherit; color: inherit; border: 1px solid #aeaaa5; border-radius: 3px; background: linear-gradient(#fdfdfc, #ece9e6); box-shadow: 0 1px 0 rgba(0, 0, 0, .05); white-space: nowrap; }
.btns { display: grid; grid-template-columns: repeat(4, 80px); gap: 6px; padding: 6px 0 0 2px; }
.fold { width: 22px; flex: none; display: flex; align-items: center; }
.fold .left { margin-left: 11px; border: 5px solid transparent; border-right-color: #333; border-left: 0; }
.fold .right { margin-left: 5px; border: 5px solid transparent; border-left-color: #333; border-right: 0; }
.views { width: 271px; flex: none; display: flex; flex-direction: column; }
.views .head { height: 22px; }
.type { display: flex; align-items: center; height: 39px; flex: none; padding: 0 0 2px 2px; }
.combo { margin-left: 6px; width: 138px; height: 25px; border: 1px solid #aeaaa5; border-radius: 3px; background: linear-gradient(#fdfdfc, #efece9); display: flex; align-items: center; justify-content: space-between; padding: 0 6px 0 4px; }
.combo i { border: 4px solid transparent; border-top-color: #555; border-bottom: 0; }
.type button { width: 80px; margin-left: 6px; }
.vtree { height: 461px; flex: none; border: 1px solid #b9b5b0; background: linear-gradient(#dedcda, #dedcda) 134px 0 / 1px 100% no-repeat #fff; }
.vrow { display: flex; height: 17px; align-items: center; line-height: 17px; }
.vrow .name { width: 135px; padding-left: 24px; }
.vrow .arrow { width: 11px; margin-right: 8px; }
.vrow.top .name { padding-left: 4px; }
.vrow .val { padding-left: 2px; }
.btns.vb { grid-template-columns: repeat(3, 85px); }
.hgrip.mid { margin: 1px 0 3px 639px; }
.time .head { height: 22px; padding-left: 4px; }
.time { flex: 1; display: flex; flex-direction: column; }
.fields { display: flex; align-items: center; height: 39px; padding-left: 11px; }
.fields label { margin-right: 6px; display: flex; }
.field { width: 142px; height: 25px; margin-right: 6px; padding-left: 3px; border: 1px solid #aeaaa5; border-radius: 3px; background: #fff; display: flex; align-items: center; }
.exp { margin-left: auto; margin-right: 17px; display: flex; align-items: center; gap: 5px; }
.foot { display: flex; padding: 4px 1px 0 2px; }
.foot button { width: 53px; }
.fps { margin-left: auto; line-height: 17px; }
</style>
